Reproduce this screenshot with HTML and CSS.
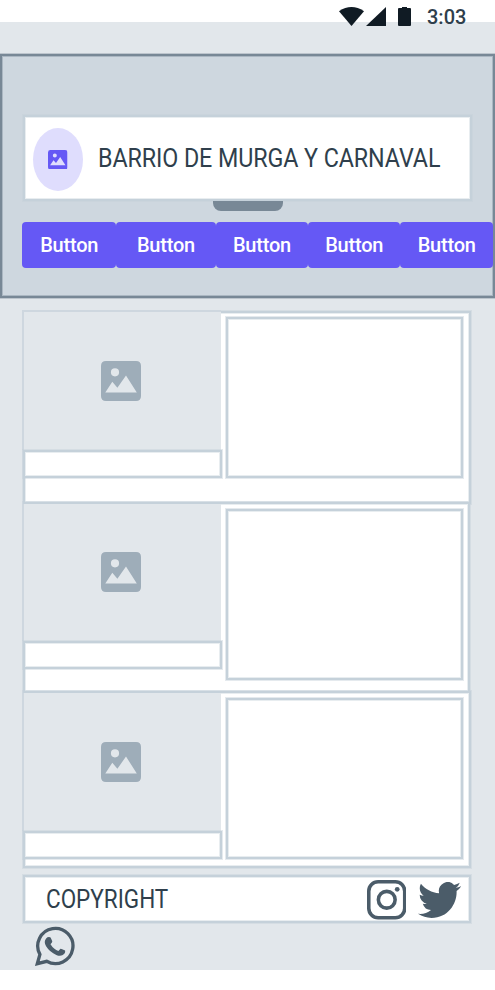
FILE: index.html
```
<!DOCTYPE html>
<html lang="es">
<head>
<meta charset="utf-8">
<title>Barrio de Murga y Carnaval</title>
<link rel="stylesheet" href="styles.css">
</head>
<body>
<svg class="defs" aria-hidden="true">
  <symbol id="picture" viewBox="0 0 40 40">
    <path fill-rule="evenodd" d="M5 0H35Q40 0 40 5V35Q40 40 35 40H5Q0 40 0 35V5Q0 0 5 0ZM14 7.2A4.1 4.1 0 1 0 14 15.4A4.1 4.1 0 1 0 14 7.2ZM4.300 31.500H35.800L25 14.500L16.400 26.800L11.300 20.800Z"/>
  </symbol>
</svg>
<div class="status">
  <svg class="wifi" viewBox="0 0 25 19"><path d="M0 4.200Q12.500-4.200 25 4.200L12.500 19Z"/></svg>
  <svg class="signal" viewBox="0 0 20 19"><path d="M20 0V19H0Z"/></svg>
  <svg class="battery" viewBox="0 0 13 19"><path d="M4 0H9V1H12Q13 1 13 2V18Q13 19 12 19H1Q0 19 0 18V2Q0 1 1 1H4Z"/></svg>
  <span class="time">3:03</span>
</div>
<div class="screen">
  <header class="header">
    <div class="title outlined">
      <span class="avatar"><svg><use href="#picture"/></svg></span>
      <h1>BARRIO DE MURGA Y CARNAVAL</h1>
    </div>
    <div class="handle"></div>
    <nav class="buttons">
      <button>Button</button><button>Button</button><button>Button</button><button>Button</button><button>Button</button>
    </nav>
  </header>
  <main>
    <article class="card first outlined">
      <div class="left"><div class="image"><svg><use href="#picture"/></svg></div><div class="caption outlined"></div></div>
      <div class="detail outlined"></div>
    </article>
    <article class="card second outlined">
      <div class="left"><div class="image"><svg><use href="#picture"/></svg></div><div class="caption outlined"></div></div>
      <div class="detail outlined"></div>
    </article>
    <article class="card third outlined">
      <div class="left"><div class="image"><svg><use href="#picture"/></svg></div><div class="caption outlined"></div></div>
      <div class="detail outlined"></div>
    </article>
  </main>
  <footer class="footer outlined">
    <span class="copyright">COPYRIGHT</span>
    <svg class="instagram" viewBox="0 0 40 40" fill="none" stroke="#4b5c69" stroke-width="3.600"><rect x="1.800" y="1.800" width="36.400" height="36.400" rx="9.500"/><circle cx="20" cy="20" r="8.500"/><circle cx="30.600" cy="9.400" r="2.400" fill="#4b5c69" stroke="none"/></svg>
    <svg class="twitter" viewBox="0 2.200 24 19.600" preserveAspectRatio="none"><path d="M23.953 4.570a10 10 0 01-2.825.775 4.958 4.958 0 002.163-2.723c-.951.555-2.005.959-3.127 1.184a4.920 4.920 0 00-8.384 4.482C7.690 8.095 4.067 6.130 1.640 3.162a4.822 4.822 0 00-.666 2.475c0 1.710.870 3.213 2.188 4.096a4.904 4.904 0 01-2.228-.616v.060a4.923 4.923 0 003.946 4.827 4.996 4.996 0 01-2.212.085 4.936 4.936 0 004.604 3.417 9.867 9.867 0 01-6.102 2.105c-.390 0-.779-.023-1.170-.067a13.995 13.995 0 007.557 2.209c9.053 0 13.998-7.496 13.998-13.985 0-.210 0-.420-.015-.630A9.935 9.935 0 0024 4.590z"/></svg>
  </footer>
  <svg class="whatsapp" viewBox="0 0 40 40"><path fill="none" stroke="#4b5c69" stroke-width="3.300" d="M2.300 37.700L4.900 28.400A17.600 17.600 0 1 1 11.700 35.300Z"/><path d="M11.100 12.500Q12.800 10.500 15.100 11.200Q15.900 11.500 17.300 15.300Q17.500 16.100 15.500 18.300Q18.800 23.600 23.400 25.100L25.500 22.700Q26.100 22.400 30.100 24.600Q30.700 27.800 27.300 29.300Q24.700 30.400 21.300 28.900Q14.800 26.300 11.100 20.300Q8.400 15.700 11.100 12.500Z"/></svg>
</div>
</body>
</html>
```
FILE: styles.css
```
* { box-sizing: border-box; }
body {
  margin: 0;
  width: 495px;
  height: 990px;
  overflow: hidden;
  background: #fff;
  color: #2f3f4c;
  font-family: Roboto, "Liberation Sans", sans-serif;
}
svg { display: block; flex: none; }
.defs { position: absolute; width: 0; height: 0; }

/* the status bar hangs over the top edge of the screen */
.status {
  position: relative;
  z-index: 1;
  display: flex;
  height: 22px;
  padding: 7px 0 0 339px;
  fill: #101b24;
}
.wifi { width: 25px; height: 19px; }
.signal { width: 20px; height: 19px; margin-left: 2px; }
.battery { width: 13px; height: 19px; margin-left: 12px; }
.time {
  margin: -2px 0 0 16px;
  font-size: 20px;
  line-height: 24px;
  font-weight: 500;
}

.screen { height: 947.5px; padding-top: 32px; background: #e2e7eb; }
.outlined {
  border: 2px solid #c5d1da;
  background: #fff;
  box-shadow: 0 0 0 1px rgba(197, 209, 218, .45), inset 0 0 0 1px rgba(197, 209, 218, .4);
}

.header {
  height: 244px;
  padding: 59px 0 0 21px;
  border: 2px solid #788896;
  background: #ced7df;
  box-shadow: inset 0 0 0 1px rgba(120, 136, 150, .4), 0 0 0 1px rgba(120, 136, 150, .35);
}
.title { display: flex; align-items: center; width: 449px; height: 86px; padding-left: 8px; }
.avatar {
  display: grid;
  place-items: center;
  flex: none;
  width: 50px;
  height: 63px;
  margin-top: 3px;
  border-radius: 50%;
  background: #dfddfd;
}
.avatar svg { width: 19.5px; height: 19.5px; fill: #6558f5; }
h1 {
  margin: 2px 0 0 14.5px;
  font-size: 25px;
  line-height: 30px;
  font-weight: 400;
  white-space: nowrap;
  letter-spacing: -0.1px;
  transform: scaleX(.932);
  transform-origin: left;
}
.handle { width: 70px; height: 10px; margin-left: 189.5px; border-radius: 0 0 8px 8px; background: #788896; }
.buttons { display: grid; grid-template-columns: 93.5px 100px 92px 92.5px 92.5px; margin: 10.5px 0 0 -1px; }
button {
  height: 46px;
  padding: 0 0 0 1px;
  border: 0;
  border-radius: 4px;
  background: #6558f5;
  color: #fff;
  font: 500 20px/46px Roboto, sans-serif;
  letter-spacing: -0.2px;
}

main { padding: 13px 0 0 23px; }
.card { display: flex; align-items: flex-start; width: 448px; }
.first { height: 193px; }
.second { width: 447px; height: 191px; margin-top: -2px; }
.third { height: 177px; margin-top: -2px; }
.left { flex: none; width: 199px; margin-left: -2px; }
.image {
  display: grid;
  place-items: center;
  height: 137px;
  margin: 0 1px 0 -1px;
  padding-right: 3px;
  border-left: 2px solid #ced7df;
  background: #e2e7eb;
}
.image svg { width: 40px; height: 40px; fill: #9eadb9; }
.first .image { height: 140px; margin-top: -3px; border-top: 2px solid #ced7df; }
.second .image { padding-bottom: 1px; }
.third .image { height: 138px; }
.caption { height: 28px; }
.detail { flex: none; width: 237px; height: 161px; margin: 5px 0 0 4px; }
.first .detail { margin-top: 4px; }
.second .detail { height: 171px; }

.footer { display: flex; width: 448px; height: 48px; margin: 7px 0 0 23px; padding: 3px 8px 0 21px; }
.copyright { font-size: 25px; line-height: 40px; transform: scaleX(.9); transform-origin: left; }
.instagram { width: 39.5px; height: 39.5px; margin-left: auto; }
.twitter { width: 43px; height: 36px; margin: 2px 0 0 12px; fill: #4b5c69; }
.whatsapp { width: 40px; height: 40px; margin: 3px 0 0 35px; fill: #4b5c69; }
```
